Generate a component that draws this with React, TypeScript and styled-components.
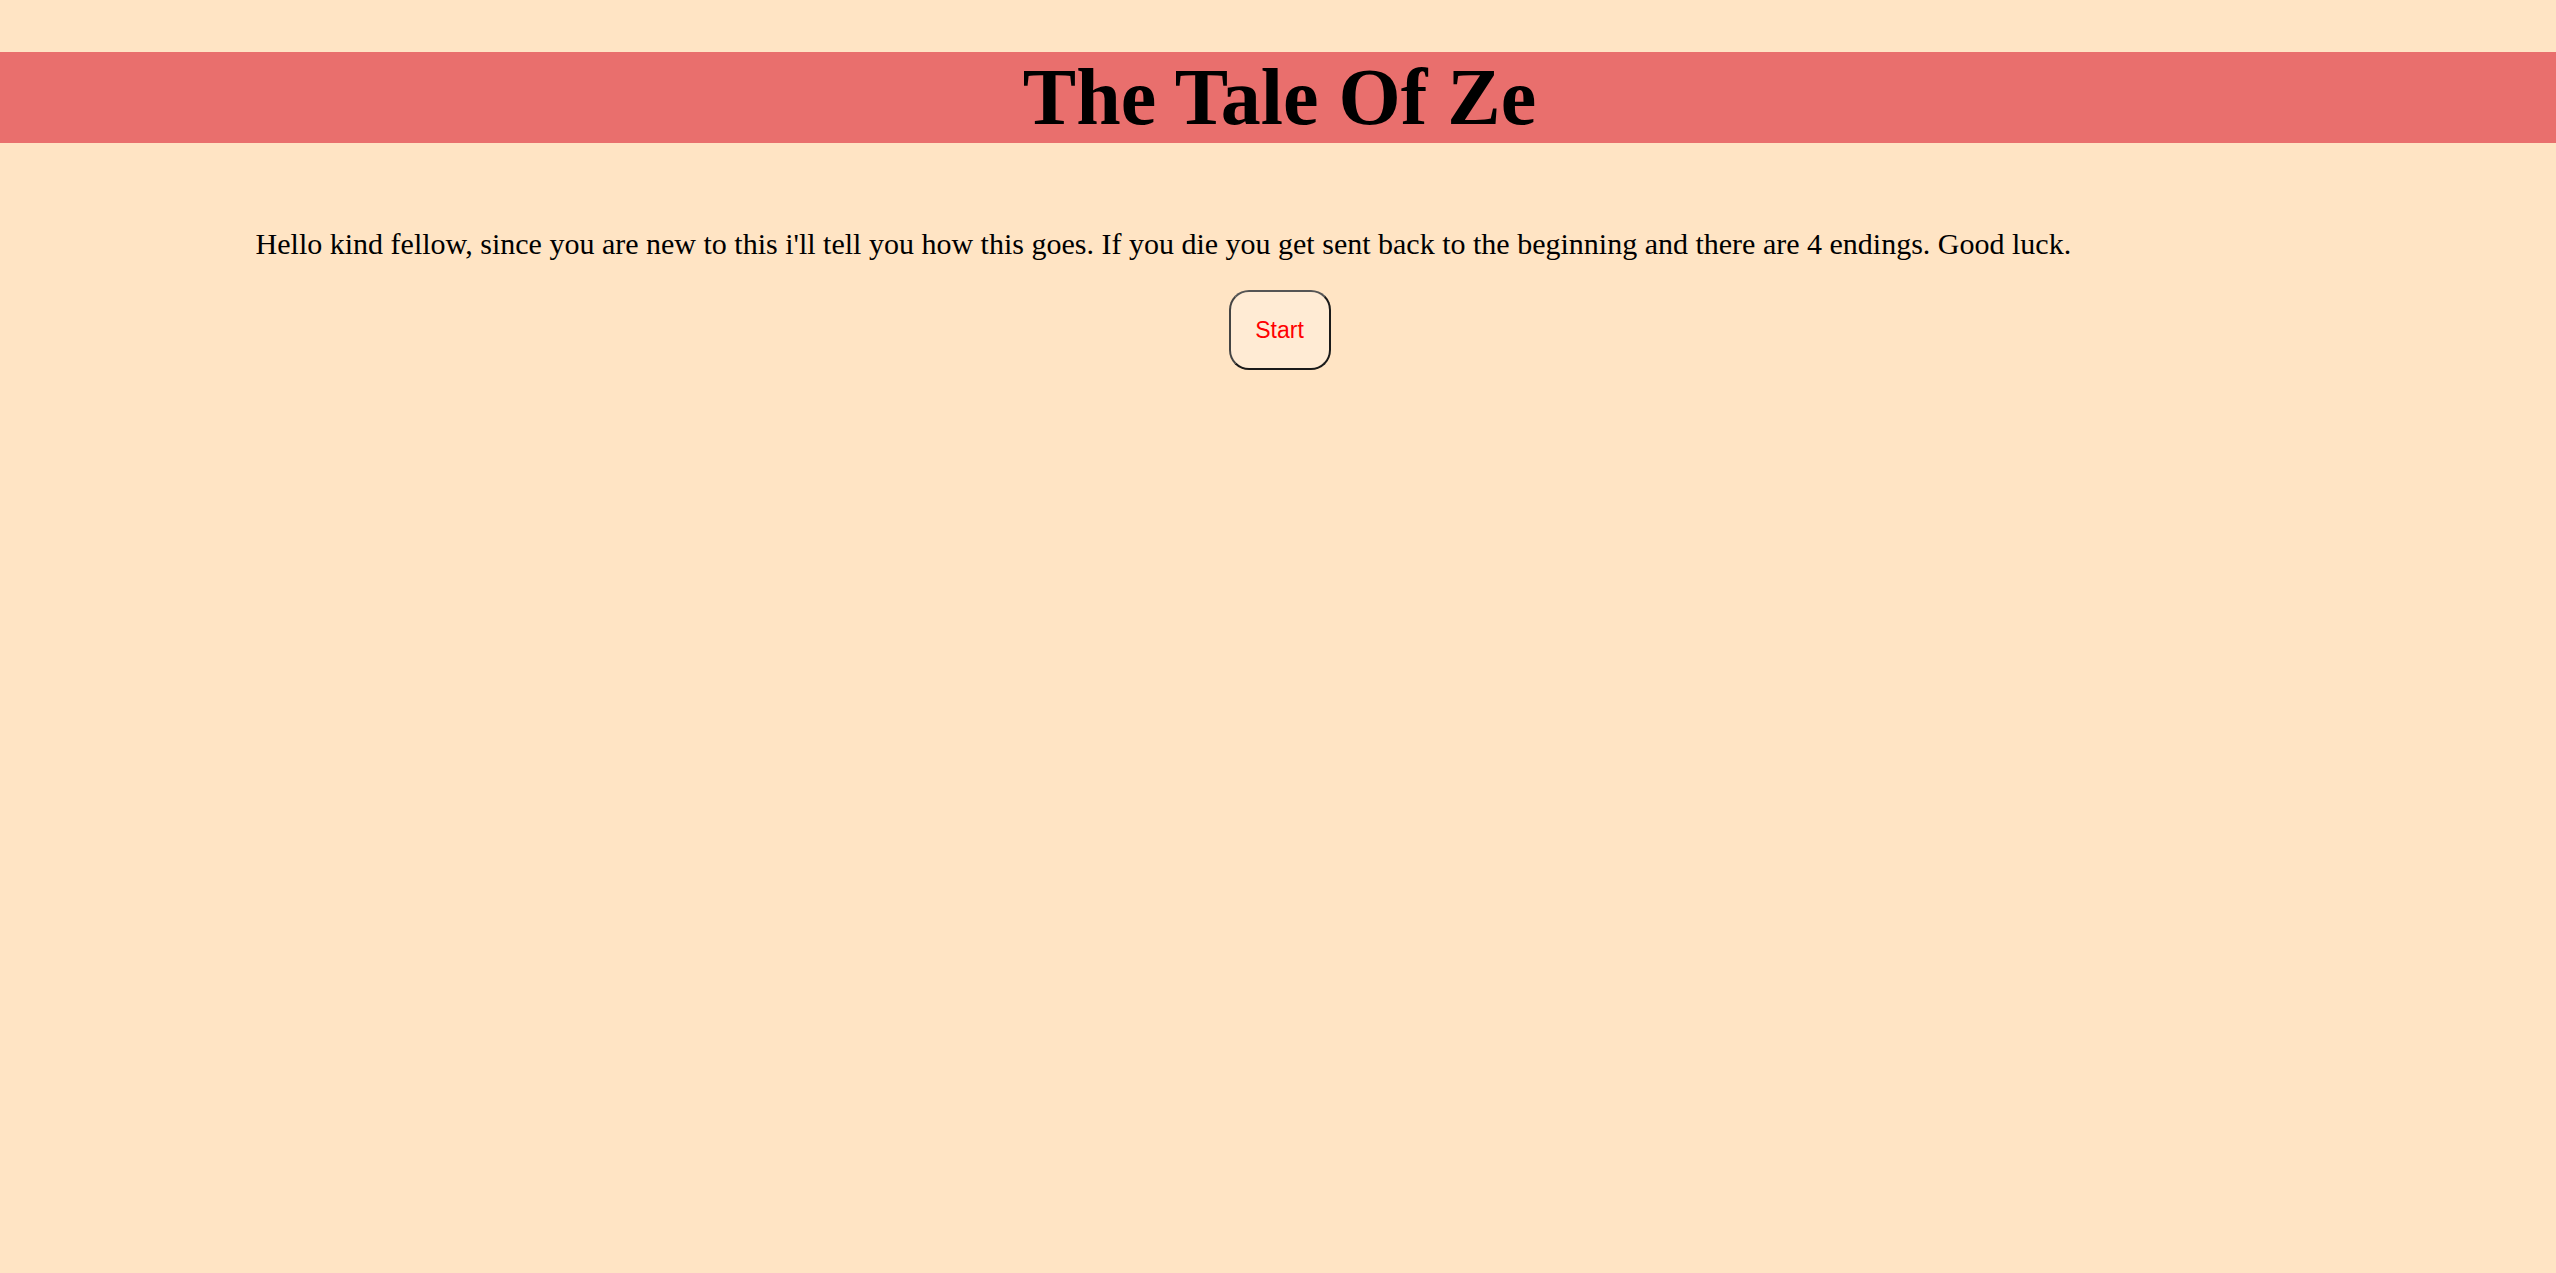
import React from "react";
import styled, { createGlobalStyle } from "styled-components";

const Global = createGlobalStyle`
  html, body {
    margin: 0;
    padding: 0;
    background: #ffe4c4;
    font-family: "Liberation Serif", "Times New Roman", serif;
  }
`;

const Page = styled.div`
  display: flex;
  flex-direction: column;
  min-height: 1273px;
  padding-top: 52px;
  box-sizing: border-box;
`;

const Title = styled.h1`
  margin: 0;
  height: 91px;
  line-height: 91px;
  background: #e96f6d;
  color: #000;
  font-size: 80px;
  font-weight: bold;
  text-align: center;
  padding-left: 3px;
`;

const Intro = styled.p`
  margin: 84px 10% 0;
  font-size: 30px;
  line-height: 34px;
  color: #000;
`;

const Actions = styled.div`
  display: flex;
  justify-content: center;
  margin-top: 29px;
  padding-left: 3px;
`;

const StartButton = styled.button`
  width: 102px;
  height: 80px;
  box-sizing: border-box;
  border: 2px solid #1a1a1a;
  border-top-color: #555;
  border-left-color: #444;
  border-radius: 20px;
  background: #ffebd4;
  color: #ff0000;
  font-family: "Liberation Sans", Arial, sans-serif;
  font-size: 23px;
  padding: 0;
  cursor: pointer;
`;

export default function App() {
  return (
    <>
      <Global />
      <Page>
        <Title>The Tale Of Ze</Title>
        <Intro>
          Hello kind fellow, since you are new to this i'll tell you how this goes. If you die you get sent back to the beginning and there are 4 endings. Good luck.
        </Intro>
        <Actions>
          <StartButton>Start</StartButton>
        </Actions>
      </Page>
    </>
  );
}
